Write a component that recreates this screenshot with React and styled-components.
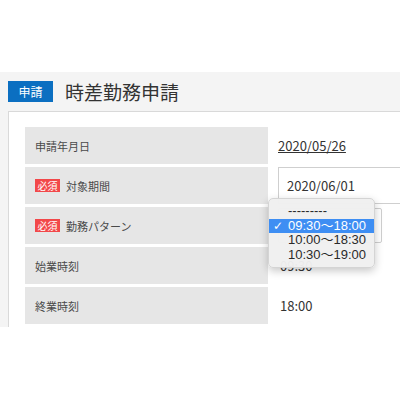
import styled, { createGlobalStyle } from "styled-components";

const GlobalStyle = createGlobalStyle`
    body {
        margin: 0;
        background: #fff;
        font-family: "Noto Sans CJK JP", "Noto Sans", sans-serif;
        color: #333;
    }
`;

const Screen = styled.div`
    margin-top: 72px;
    height: 255px;
    overflow: hidden;
    background: #f4f4f4;
`;

const Header = styled.div`
    height: 39px;
    display: flex;
    align-items: center;
    gap: 12px;
    padding-left: 8px;
`;

const Badge = styled.span`
    display: inline-flex;
    align-items: center;
    justify-content: center;
    background: ${(p) => (p.$red ? "#f2484a" : "#0b6fc1")};
    color: #fff;
    font-size: ${(p) => (p.$red ? "10px" : "12px")};
    width: ${(p) => (p.$red ? "25px" : "45px")};
    height: ${(p) => (p.$red ? "13px" : "21px")};
    line-height: 1;
`;

const Title = styled.h1`
    margin: 0;
    font-size: 19px;
    font-weight: 400;
    color: #333;
`;

const Panel = styled.div`
    margin-left: 8px;
    border-left: 1px solid #d9d9d9;
    border-top: 1px solid #d9d9d9;
    background: #fff;
    padding: 15px 0 0 16px;
    height: 100%;
`;

const Table = styled.div`
    display: grid;
    grid-template-columns: 243px 1fr;
    grid-auto-rows: 37px;
    row-gap: 3px;
`;

const Label = styled.div`
    background: #e6e6e6;
    display: flex;
    align-items: center;
    gap: 6px;
    padding-left: 10px;
    font-size: 11px;
    color: #4a4a4a;
`;

const Value = styled.div`
    position: relative;
    display: flex;
    align-items: center;
    padding-left: ${(p) => p.$pad || "10px"};
    font-size: 13px;
    color: #333;
`;

const Link = styled.a`
    color: #333;
    text-decoration: underline;
`;

const Input = styled.div`
    box-sizing: border-box;
    height: 37px;
    width: 200px;
    border: 1px solid #cfcfcf;
    border-right: none;
    display: flex;
    align-items: center;
    padding-left: 8px;
`;

const Select = styled.div`
    box-sizing: border-box;
    height: 35px;
    width: 104px;
    border: 1px solid #cfcfcf;
    border-radius: 2px;
`;

// native-looking popup list of the pattern select
const Menu = styled.ul`
    position: absolute;
    left: 0;
    top: -9px;
    width: 107px;
    margin: 0;
    padding: 5px 0;
    list-style: none;
    background: rgba(240, 240, 240, 0.97);
    border: 1px solid #d4d4d4;
    border-radius: 5px;
    box-shadow: 0 3px 9px rgba(0, 0, 0, 0.22);
    box-sizing: border-box;
    font-family: "Liberation Sans", "Noto Sans CJK JP", sans-serif;
    font-size: 13px;
    z-index: 2;
`;

const MenuItem = styled.li`
    position: relative;
    height: 14.5px;
    line-height: 14.5px;
    padding-left: 19px;
    white-space: nowrap;
    color: ${(p) => (p.$active ? "#fff" : "#2a2a2a")};
    background: ${(p) => (p.$active ? "#3e8ef3" : "transparent")};
`;

const Check = styled.span`
    position: absolute;
    left: 4px;
    top: 0;
    font-family: "DejaVu Sans", sans-serif;
    font-size: 12px;
    font-weight: 700;
`;

const options = ["---------", "09:30〜18:00", "10:00〜18:30", "10:30〜19:00"];

const App = () => {
    return (
        <>
            <GlobalStyle />
            <Screen>
                <Header>
                    <Badge>申請</Badge>
                    <Title>時差勤務申請</Title>
                </Header>
                <Panel>
                    <Table>
                        <Label>申請年月日</Label>
                        <Value>
                            <Link>2020/05/26</Link>
                        </Value>

                        <Label>
                            <Badge $red>必須</Badge>
                            対象期間
                        </Label>
                        <Value>
                            <Input>2020/06/01</Input>
                        </Value>

                        <Label>
                            <Badge $red>必須</Badge>
                            勤務パターン
                        </Label>
                        <Value>
                            <Select />
                            <Menu>
                                {options.map((opt, i) => (
                                    <MenuItem key={opt} $active={i === 1}>
                                        {i === 1 && <Check>✓</Check>}
                                        {opt}
                                    </MenuItem>
                                ))}
                            </Menu>
                        </Value>

                        <Label>始業時刻</Label>
                        <Value $pad="12px">09:30</Value>

                        <Label>終業時刻</Label>
                        <Value $pad="12px">18:00</Value>

                        <Label />
                        <Value>
                            <Input />
                        </Value>
                    </Table>
                </Panel>
            </Screen>
        </>
    );
};

export default App;
